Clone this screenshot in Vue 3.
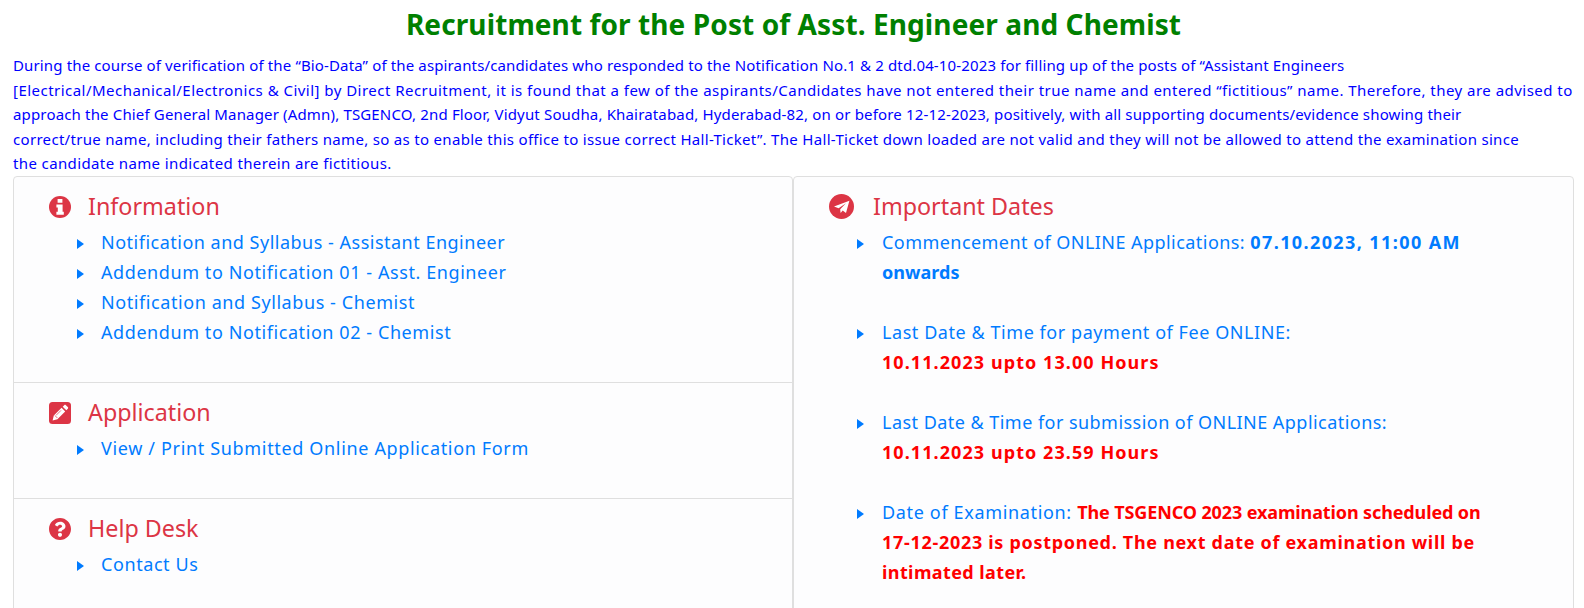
<script setup>
const sections = [
  { title: 'Information', icon: 'info', links: ['Notification and Syllabus - Assistant Engineer', 'Addendum to Notification 01 - Asst. Engineer', 'Notification and Syllabus - Chemist', 'Addendum to Notification 02 - Chemist'] },
  { title: 'Application', icon: 'pen', links: ['View / Print Submitted Online Application Form'] },
  { title: 'Help Desk', icon: 'help', links: ['Contact Us'] },
]
const intro = [
  'During the course of verification of the “Bio-Data” of the aspirants/candidates who responded to the Notification No.1 & 2 dtd.04-10-2023 for filling up of the posts of “Assistant Engineers',
  '[Electrical/Mechanical/Electronics & Civil] by Direct Recruitment, it is found that a few of the aspirants/Candidates have not entered their true name and entered “fictitious” name. Therefore, they are advised to',
  'approach the Chief General Manager (Admn), TSGENCO, 2nd Floor, Vidyut Soudha, Khairatabad, Hyderabad-82, on or before 12-12-2023, positively, with all supporting documents/evidence showing their',
  'correct/true name, including their fathers name, so as to enable this office to issue correct Hall-Ticket”. The Hall-Ticket down loaded are not valid and they will not be allowed to attend the examination since',
  'the candidate name indicated therein are fictitious.',
]
</script>

<template>
  <div class="page">
    <h1 class="title">Recruitment for the Post of Asst. Engineer and Chemist</h1>
    <p class="intro"><span v-for="line in intro" :key="line" class="intro-line">{{ line }}</span></p>
    <div class="cards">
      <div class="card">
        <section v-for="s in sections" :key="s.title" class="section">
          <h2 class="heading">
            <svg v-if="s.icon === 'info'" class="icon" viewBox="0 0 22 22"><circle cx="11" cy="11" r="11"/><path class="pencil" d="M8.6 3h4.8v3.8H8.6zM7.4 8.4h6.2v7.4h1.2v3H7.4v-3h1.4v-4.4H7.4z"/></svg>
            <svg v-else-if="s.icon === 'pen'" class="icon" viewBox="0 0 22 22"><rect width="22" height="22" rx="3.5"/><path class="pencil" d="M15.2 3.2c.5-.5 1.2-.5 1.7 0l1.9 1.9c.5.5.5 1.2 0 1.7l-1.5 1.5-3.6-3.6zM12.6 5.8l3.6 3.6-7.8 7.8-4.8 1.2 1.2-4.8z"/><path class="pencil-line" d="M6 13.6l2.4 2.4M12 8.4l-5 5"/></svg>
            <svg v-else class="icon" viewBox="8 8 496 496"><path d="M504 256c0 136.997-111.043 248-248 248S8 392.997 8 256C8 119.083 119.043 8 256 8s248 111.083 248 248zM262.655 90c-54.497 0-89.255 22.957-116.549 63.758-3.536 5.286-2.353 12.415 2.715 16.258l34.699 26.31c5.205 3.947 12.621 3.008 16.665-2.122 17.864-22.658 30.113-35.797 57.303-35.797 20.429 0 45.698 13.148 45.698 32.958 0 14.976-12.363 22.667-32.534 33.976C247.128 238.528 216 254.941 216 296v4c0 6.627 5.373 12 12 12h56c6.627 0 12-5.373 12-12v-1.333c0-28.462 83.186-29.647 83.186-106.667 0-58.002-60.165-102-116.531-102zM256 338c-25.365 0-46 20.635-46 46 0 25.364 20.635 46 46 46s46-20.636 46-46c0-25.365-20.635-46-46-46z"/></svg>
            <span>{{ s.title }}</span>
          </h2>
          <ul class="list">
            <li v-for="l in s.links" :key="l" class="item"><i class="caret"></i><a class="link">{{ l }}</a></li>
          </ul>
        </section>
      </div>
      <div class="card card-right">
        <h2 class="heading heading-right">
          <svg class="plane" viewBox="0 0 25 25"><circle cx="12.5" cy="12.5" r="12.5"/><path class="pencil" d="M20.4 6.8L5 12.6l4.6 1.7 7.4-5-5.8 6 .4 3.6 2.1-2.3 3.3 2.4z"/></svg>
          <span>Important Dates</span>
        </h2>
        <ul class="list list-right">
          <li class="item"><i class="caret"></i><a class="link"><span class="t-comm">Commencement of ONLINE Applications: </span><b class="t-date">07.10.2023, 11:00 AM</b><br><b class="t-onw">onwards</b></a></li>
          <li class="item"><i class="caret"></i><a class="link">Last Date &amp; Time for payment of Fee ONLINE:<br><b class="red t-hours">10.11.2023 upto 13.00 Hours</b></a></li>
          <li class="item"><i class="caret"></i><a class="link t-sub">Last Date &amp; Time for submission of ONLINE Applications:<br><b class="red t-hours">10.11.2023 upto 23.59 Hours</b></a></li>
          <li class="item"><i class="caret"></i><a class="link t-exam">Date of Examination: <b class="red t-the">The TSGENCO 2023 examination scheduled on</b><br><b class="red t-next">17-12-2023 is postponed. The next date of examination will be</b><br><b class="red t-later">intimated later.</b></a></li>
        </ul>
      </div>
    </div>
  </div>
</template>

<style scoped>
.page { height: 608px; overflow: hidden; box-sizing: border-box; padding: 0 10px 0 13px; font-family: "Noto Sans", sans-serif; background: #fff; }
.title { margin: 0; padding-top: 6px; height: 44px; box-sizing: border-box; text-align: center; font-size: 28px; line-height: 37px; letter-spacing: .1px; font-weight: 700; color: #008000; }
.intro { margin: 0 -10px 0 0; color: #0000ff; font-size: 15px; line-height: 24.5px; padding-top: 9px; height: 132px; box-sizing: border-box; }
.intro-line { display: block; white-space: nowrap; }
.intro-line:nth-child(1) { letter-spacing: .14px; }
.intro-line:nth-child(2) { letter-spacing: .47px; }
.intro-line:nth-child(3) { letter-spacing: .16px; }
.intro-line:nth-child(4) { letter-spacing: .31px; }
.intro-line:nth-child(5) { letter-spacing: .38px; }
.cards { display: grid; grid-template-columns: 780px 781px; }
.card { height: 440px; border: 1px solid #dfdfdf; border-radius: 4px; background: #fdfdfe; box-sizing: border-box; }
.section { padding: 15px 0 35px 35px; border-bottom: 1px solid #dfdfdf; }
.section:last-child { border-bottom: 0; }
.heading { margin: 0 0 6px; display: flex; align-items: center; gap: 17px; color: #dc3545; font-size: 23.3px; line-height: 29px; font-weight: 400; }
.icon { width: 22px; height: 22px; fill: #dc3545; flex: none; }
.pencil { fill: #fff; }
.pencil-line { fill: none; stroke: #dc3545; stroke-width: .7; }
.list { list-style: none; margin: 0; padding: 0 0 0 28px; }
.item { position: relative; padding-left: 24px; font-size: 18px; line-height: 30px; letter-spacing: .58px; white-space: nowrap; }
.section:first-child .item:first-child { letter-spacing: .5px; }
.section:nth-child(2) .item { letter-spacing: .66px; }
.caret { position: absolute; left: 0; top: 12px; width: 0; height: 0; border-left: 7px solid #007bff; border-top: 5.5px solid transparent; border-bottom: 5.5px solid transparent; }
.link { color: #007bff; }
.red { color: #ff0000; }
.card-right { padding: 15px 0 0 35px; }
.heading-right { gap: 19px; }
.plane { width: 25px; height: 25px; fill: #dc3545; flex: none; }
.list-right { padding-left: 28px; }
.list-right .item { margin-bottom: 30px; padding-left: 25px; letter-spacing: .56px; }
b { font-weight: 700; }
.t-comm { letter-spacing: .45px; }
.t-date { letter-spacing: 1.4px; }
.t-onw { letter-spacing: .05px; }
.t-sub { letter-spacing: .46px; }
.t-hours { letter-spacing: 1.07px; }
.t-exam { letter-spacing: .66px; }
.t-the { letter-spacing: -.12px; }
.t-next { letter-spacing: .7px; }
.t-later { letter-spacing: .4px; }
</style>
